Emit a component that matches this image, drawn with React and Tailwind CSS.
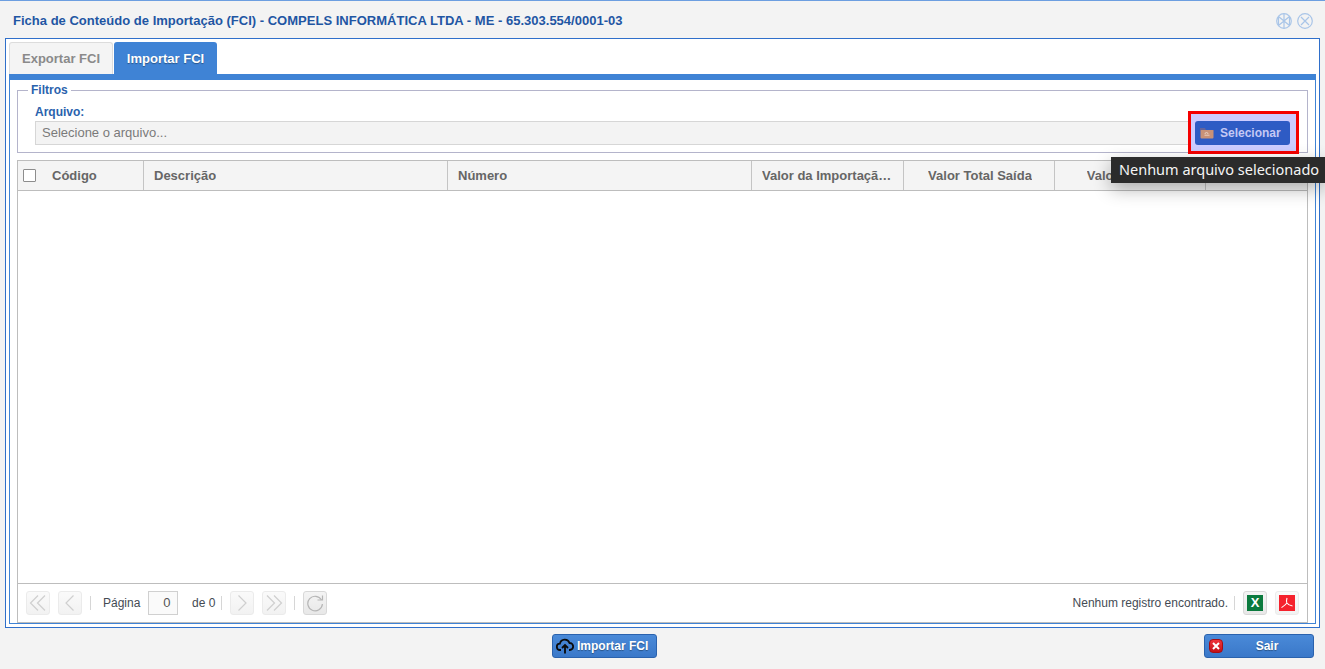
import { useState } from "react";

const font = { fontFamily: '"Liberation Sans", Arial, sans-serif' };

const PagerButton = ({ children, dark }) => (
	<div
		className={`w-6 h-6 rounded-[3px] border flex items-center justify-center ${
			dark
				? "border-[#d8d8d8] bg-gradient-to-b from-[#f4f4f4] to-[#e8e8e8]"
				: "border-[#ebebeb] bg-gradient-to-b from-[#fafafa] to-[#f2f2f2]"
		}`}
	>
		{children}
	</div>
);

const Chevrons = ({ double, flip }) => (
	<svg width="18" height="18" viewBox="0 0 18 18" fill="none" stroke="#cfcfcf" strokeWidth="1.2" className={flip ? "-scale-x-100" : ""}>
		{double ? <path d="M9 1.5 1.5 9 9 16.5M16 1.5 8.5 9 16 16.5" /> : <path d="M12.5 1.5 5 9l7.5 7.5" />}
	</svg>
);

const Divider = () => <div className="w-px h-[14px] bg-[#d6d6d6]" />;

const columns = [
	{ label: "Descrição", width: "w-[304px]", cls: "pl-[10px]" },
	{ label: "Número", width: "w-[304px]", cls: "pl-[10px]" },
	{ label: "Valor da Importação Total", width: "w-[152px]", cls: "px-[10px]" },
	{ label: "Valor Total Saída", width: "w-[151px]", cls: "justify-center pl-[2px]" },
	{ label: "Valor Unitário", width: "w-[151px]", cls: "justify-center pr-[2px]" },
];

const App = () => {
	const [fileName] = useState("");

	return (
		<div style={font} className="w-[1325px] h-[669px] overflow-hidden bg-[#f3f3f3] border-t border-[#6c9ee0] relative">
			<div className="h-[37px] pl-[13px] pr-[12px] flex items-center justify-between">
				<span className="text-[13px] font-bold text-[#1f56a3] mt-[2px] tracking-[0.012px]">
					Ficha de Conteúdo de Importação (FCI) - COMPELS INFORMÁTICA LTDA - ME - 65.303.554/0001-03
				</span>
				<div className="flex gap-[5px] mt-[2px]">
					<svg width="16" height="16" viewBox="0 0 16 16" fill="none" stroke="#a9c5e8" strokeWidth="1.2">
						<circle cx="8" cy="8" r="7.3" />
						<path d="M8 .7v14.6M2.5 3.5 13.5 12.5M13.5 3.5 2.5 12.5M2.5 3.5v9M13.5 3.5v9" />
					</svg>
					<svg width="16" height="16" viewBox="0 0 16 16" fill="none" stroke="#a9c5e8" strokeWidth="1.2">
						<circle cx="8" cy="8" r="7.3" />
						<path d="M4 4l8 8M12 4l-8 8" />
					</svg>
				</div>
			</div>

			<div className="mx-[5px] w-[1315px] h-[590px] border border-[#2f6fca] bg-white pt-[3px] px-[3px] pb-[3px]">
				<div className="flex h-[32px] gap-[1px]">
					<div className="w-[104px] h-[32px] pt-[1px] rounded-t-[3px] border border-b-0 border-[#dcdcdc] bg-[#f4f4f4] text-[13px] font-bold text-[#8a8a8a] flex items-center justify-center">
						Exportar FCI
					</div>
					<div className="w-[103px] h-[32px] pt-[1px] rounded-t-[3px] bg-[#3f83d5] text-[13px] font-bold text-white [text-shadow:0_1px_1px_rgba(0,0,0,0.35)] flex items-center justify-center">
						Importar FCI
					</div>
				</div>

				<div className="w-[1307px] h-[550px] border border-[#3f83d5] border-t-[6px] bg-white px-[7px] pt-[4px]">
					<fieldset className="relative w-[1291px] h-[69px] border border-[#b4b4cb] px-[17px]">
						<legend className="ml-[-7px] px-[3px] text-[12px] font-bold text-[#2a62ad] leading-[12px]">Filtros</legend>
						<div className="text-[12px] font-bold text-[#2a62ad] leading-[14px] mt-[9px]">Arquivo:</div>
						<div className="mt-[2px] w-[1160px] h-[24px] border border-[#d6d6d6] bg-[#f3f3f3] pl-[6px] flex items-center text-[13px] text-[#7a7a7a]">
							{fileName || "Selecione o arquivo..."}
						</div>
						<div className="absolute left-[1170px] top-[15px] w-[111px] h-[43px] border-[3px] border-[#f50000] bg-[#ccccff] flex items-center pl-[4px] pt-[1px]">
							<div className="w-[95px] h-[24px] rounded-[3px] bg-[#2e5bc4] flex items-center gap-[6px] pl-[5px] text-[12px] font-bold text-[#c5c8f4]">
								<svg width="14" height="12" viewBox="0 0 14 12">
									<path d="M0 1h5l1 2h8v1H0z" fill="#62639c" />
									<rect x="0.5" y="3" width="13" height="8.5" rx="1" fill="#c99277" />
									<path d="M5 7a1.5 1.5 0 0 1 3 0M4.5 8.2h5" stroke="#f0ddd2" strokeWidth="0.8" fill="none" />
								</svg>
								Selecionar
							</div>
						</div>
					</fieldset>

					<div className="mt-[7px] w-[1291px] h-[463px] border border-[#bdbdbd] flex flex-col">
						<div className="h-[30px] border-b border-[#bdbdbd] bg-[#f4f4f4] flex text-[13px] font-bold text-[#666666]">
							<div className="w-[126px] flex items-center border-r border-[#c4c4c4] pl-[5px]">
								<div className="w-[13px] h-[13px] border border-[#8d8d8d] bg-white rounded-[1px]" />
								<span className="ml-[16px]">Código</span>
							</div>
							{columns.map((col) => (
								<div key={col.label} className={`${col.width} shrink-0 flex items-center border-r border-[#c4c4c4] ${col.cls}`}>
									<span className="truncate">{col.label}</span>
								</div>
							))}
						</div>

						<div className="flex-1" />

						<div className="h-[39px] border-t border-[#bdbdbd] flex items-center px-[8px] text-[12px] text-[#444b54]">
							<PagerButton>
								<Chevrons double />
							</PagerButton>
							<div className="ml-[8px]">
								<PagerButton>
									<Chevrons />
								</PagerButton>
							</div>
							<div className="ml-[8px]">
								<Divider />
							</div>
							<span className="ml-[12px]">Página</span>
							<div className="ml-[8px] w-[30px] h-[24px] border border-[#d0d0d0] bg-[#fafafa] flex items-center justify-end pr-[7px] text-[13px] text-[#555555]">
								0
							</div>
							<span className="ml-[13.6px]">de 0</span>
							<div className="ml-[5.4px]">
								<Divider />
							</div>
							<div className="ml-[8px]">
								<PagerButton>
									<Chevrons flip />
								</PagerButton>
							</div>
							<div className="ml-[8px]">
								<PagerButton>
									<Chevrons double flip />
								</PagerButton>
							</div>
							<div className="ml-[8px]">
								<Divider />
							</div>
							<div className="ml-[8px]">
								<PagerButton dark>
									<svg width="18" height="18" viewBox="0 0 18 18" fill="none" stroke="#b5b5b5" strokeWidth="1.2">
										<path d="M15.5 6A7.3 7.3 0 1 0 16.4 10" />
										<path d="M16.5 1.5V6H11.5" />
									</svg>
								</PagerButton>
							</div>

							<span className="ml-auto">Nenhum registro encontrado.</span>
							<div className="ml-[6px]">
								<Divider />
							</div>
							<div className="ml-[8px]">
								<PagerButton dark>
									<div className="w-[16px] h-[16px] bg-[#0b7a3e] text-white text-[13px] font-bold flex items-center justify-center">X</div>
								</PagerButton>
							</div>
							<div className="ml-[8px]">
								<PagerButton>
									<svg width="16" height="16" viewBox="0 0 16 16">
										<rect width="16" height="16" fill="#f5222d" />
										<path d="M8 3c-.8 2.5-.5 4-.1 5M7.9 8c1 1.5 3 2.6 5.6 3M7.9 8c-1.2 1.7-3 3-5.4 4.6" stroke="#ffffff" strokeWidth="1.1" fill="none" />
									</svg>
								</PagerButton>
							</div>
						</div>
					</div>
				</div>
			</div>

			<div className="h-[40px] flex pt-[6px] pl-[552px] pr-[11px] text-[12px] font-bold text-white [text-shadow:0_1px_1px_rgba(0,0,0,0.35)]">
				<div className="w-[105px] h-[24px] rounded-[3px] border border-[#2a62ad] bg-gradient-to-b from-[#4a8ad8] to-[#3a78c9] flex items-center gap-[3px] pl-[3px]">
					<svg width="18" height="18" viewBox="0 0 18 18" fill="none" stroke="#0b0b0b" strokeWidth="1.8">
						<path d="M5 13H4.2a3.2 3.2 0 0 1-.3-6.4 5 5 0 0 1 9.6-.6 3.5 3.5 0 0 1 .3 7H13" />
						<path d="M9 16.5V8.5M6 11l3-3 3 3" />
					</svg>
					Importar FCI
				</div>
				<div className="ml-auto w-[110px] h-[24px] rounded-[3px] border border-[#2a62ad] bg-gradient-to-b from-[#4a8ad8] to-[#3a78c9] flex items-center pl-[4px]">
					<div className="w-[14px] h-[14px] rounded-[4px] bg-gradient-to-b from-[#f0333a] to-[#c20f16] border border-[#a50d13] flex items-center justify-center">
						<svg width="8" height="8" viewBox="0 0 8 8" stroke="#ffffff" strokeWidth="2">
							<path d="M1 1l6 6M7 1 1 7" />
						</svg>
					</div>
					<span className="flex-1 text-center pr-[2px]">Sair</span>
				</div>
			</div>

			<div
				style={{ fontFamily: '"Noto Sans", sans-serif' }}
				className="absolute left-[1111px] top-[156px] w-[214px] h-[26px] pb-[1px] bg-[#2b2b2b] text-[#f5f5f5] text-[14.5px] flex items-center pl-[8px] whitespace-nowrap shadow-[0_6px_18px_rgba(0,0,0,0.3)]"
			>
				Nenhum arquivo selecionado
			</div>
		</div>
	);
};

export default App;
